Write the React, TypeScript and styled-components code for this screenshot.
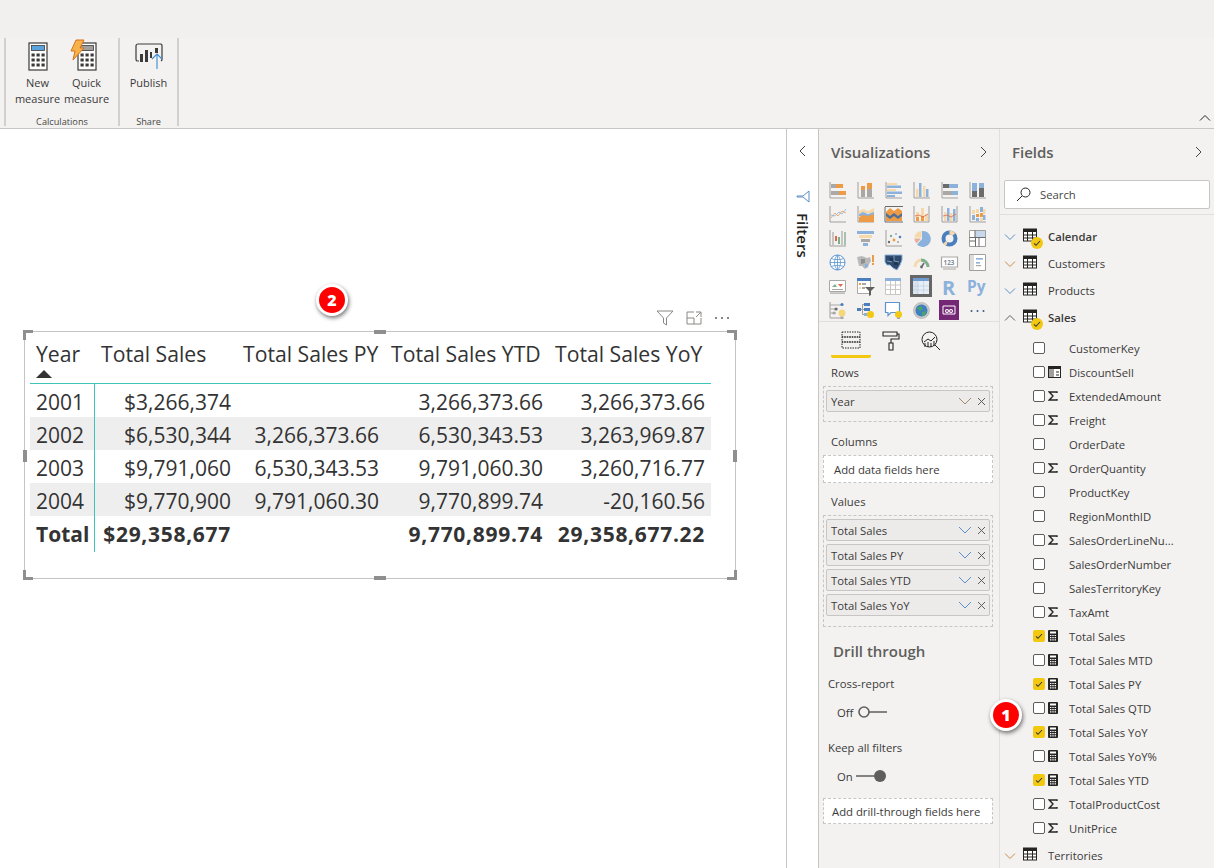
import React from "react";
import styled, { createGlobalStyle } from "styled-components";

const Global = createGlobalStyle`
  html, body { margin: 0; padding: 0; background: #fff; }
  body { font-family: "Open Sans", "Noto Sans", "Liberation Sans", sans-serif; color: #323130; }
  * { box-sizing: border-box; }
`;

const Page = styled.div`
  width: 1214px; height: 868px; display: flex; flex-direction: column; overflow: hidden;
`;
/* ---------- ribbon ---------- */
const Ribbon = styled.header`
  height: 129px; flex: none; background: #f3f2f1; border-bottom: 1px solid #c8c6c4;
  display: flex; flex-direction: column; position: relative;
`;
const RibbonTop = styled.div` height: 38px; flex: none; background: #f1f0ef; `;
const RibbonBody = styled.div` flex: 1; display: flex; padding: 0 0 2px 4px; `;
const Group = styled.section<{ $w: number; $first?: boolean }>`
  width: ${(p) => p.$w}px; display: flex; flex-direction: column; align-items: center;
  border-right: 2px solid #d2d0ce;
  ${(p) => (p.$first ? "border-left: 2px solid #d2d0ce;" : "")}
`;
const GroupButtons = styled.div` display: flex; flex: 1; padding-top: 4px; `;
const RibbonButton = styled.div<{ $w: number }>`
  width: ${(p) => p.$w}px; display: flex; flex-direction: column; align-items: center;
  font-size: 11px; line-height: 16px; text-align: center; color: #3b3a39;
  svg { display: block; margin-bottom: 4px; }
`;
const GroupLabel = styled.div` font-size: 9.2px; line-height: 12px; color: #484644; margin-bottom: -2px; padding-bottom: 0; `;
const Collapse = styled.div` position: absolute; right: 3px; bottom: 4px; height: 12px; line-height: 0; `;

/* ---------- main ---------- */
const Main = styled.main` flex: 1; display: flex; min-height: 0; `;
const Canvas = styled.div` width: 786px; flex: none; background: #fff; padding: 202px 0 0 24px; `;
const Visual = styled.div`
  width: 712px; height: 248px; border: 1px solid #c4c4c4; position: relative; padding: 0 0 0 5px;
`;
const Handle = styled.span<{ $pos: string }>`
  position: absolute; background: #8f8f8f;
  ${(p) => p.$pos}
`;
const Corner = styled.span<{ $pos: string }>`
  position: absolute; width: 10px; height: 10px; ${(p) => p.$pos}
`;
const VisualTools = styled.div`
  position: absolute; right: 5px; top: -22px; display: flex; gap: 12px; align-items: center;
`;
const Badge = styled.div<{ $x: number; $y: number }>`
  position: absolute; left: ${(p) => p.$x}px; top: ${(p) => p.$y}px; width: 32px; height: 32px; border-radius: 50%;
  background: #f00; border: 3px solid #fff; box-shadow: 1px 2px 4px rgba(0,0,0,.55);
  color: #fff; font: 800 16px/26px "Open Sans", sans-serif; text-align: center; z-index: 3;
`;
const COLS = "65px 142px 148px 164px 162px";
const HeadRow = styled.div`
  display: grid; grid-template-columns: ${COLS}; width: 681px; height: 52px; border-bottom: 1px solid #3fc4b9;
  font-size: 21.2px; line-height: 27px; color: #333;
`;
const HeadCell = styled.div` padding: 8px 0 0 6px; white-space: nowrap; position: relative; `;
const SortArrow = styled.span`
  position: absolute; left: 6px; top: 38px; width: 0; height: 0;
  border-left: 8px solid transparent; border-right: 8px solid transparent; border-bottom: 8px solid #333;
`;
const BodyRow = styled.div<{ $stripe?: boolean; $total?: boolean }>`
  display: grid; grid-template-columns: ${COLS}; width: 681px; height: 33px;
  background: ${(p) => (p.$stripe ? "#eeeeee" : "transparent")};
  font-size: 21px; line-height: 36px; color: #333; font-weight: ${(p) => (p.$total ? 700 : 400)};
`;
const NumCell = styled.div<{ $spread?: boolean }>`
  text-align: right; padding-right: 6px; white-space: nowrap;
  letter-spacing: ${(p) => (p.$spread ? "0.7px" : "0")};
`;
const YearCell = styled.div` padding-left: 6px; border-right: 1px solid #3fc4b9; white-space: nowrap; `;

const FilterStrip = styled.aside`
  width: 33px; flex: none; background: #fff; border-left: 1px solid #c8c6c4; border-right: 1px solid #c8c6c4;
  display: flex; flex-direction: column; align-items: center; padding-top: 16px; color: #323130;
`;
const VerticalText = styled.div`
  writing-mode: vertical-rl; font-size: 15px; font-weight: 600; line-height: 16px; margin-top: 10px; color: #252423;
`;
const VizPanel = styled.aside`
  width: 181px; flex: none; background: #f3f2f1; border-right: 1px solid #e1dfdd; display: flex; flex-direction: column;
`;
const PanelHead = styled.div<{ $left: number; $right: number }>`
  height: 46px; flex: none; display: flex; align-items: center; justify-content: space-between;
  padding: 0 ${(p) => p.$right}px 0 ${(p) => p.$left}px; font-size: 15px; font-weight: 600; color: #605e5c;
`;
const VizGrid = styled.div`
  height: 147px; flex: none; padding: 3px 0 0 4px; display: grid;
  grid-template-columns: repeat(6, 28px); grid-auto-rows: 24px; border-bottom: 1px solid #e1dfdd;
`;
const VizCell = styled.div`
  display: flex; align-items: center; justify-content: center; position: relative;
`;
const Tabs = styled.div` display: flex; height: 36px; flex: none; padding-left: 12px; `;
const Tab = styled.div<{ $on?: boolean }>`
  width: 40px; display: flex; justify-content: center; padding-top: 9px;
  border-bottom: 3px solid ${(p) => (p.$on ? "#f2c811" : "transparent")};
  border-radius: 0 0 2px 2px;
`;
const WellLabel = styled.div<{ $mt: number }>`
  margin-top: ${(p) => p.$mt}px; height: 18px; line-height: 20px; padding-left: 12px; font-size: 11.3px; color: #3b3a39;
`;
const Well = styled.div<{ $mt?: number; $h: number; $empty?: boolean; $wide?: boolean }>`
  margin: ${(p) => p.$mt ?? 5}px 6px 0 4px; height: ${(p) => p.$h}px; flex: none;
  border: 1px dashed #c8c6c4; background: ${(p) => (p.$empty ? "#fff" : "transparent")};
  padding: ${(p) => (p.$empty ? "0" : "3px 2px 0")};
  display: flex; flex-direction: column; gap: 3px;
  ${(p) => (p.$empty ? `justify-content: center; padding-left: ${p.$wide ? 8 : 10}px; font-size: 11.3px; color: #3b3a39; white-space: nowrap;` : "")}
`;
const Pill = styled.div`
  height: 22px; flex: none; background: #edebe9; border: 1px solid #c8c6c4; border-radius: 2px;
  display: flex; align-items: center; padding: 0 3px 0 4px; font-size: 11.3px; color: #3b3a39;
`;
const PillName = styled.span` flex: 1; white-space: nowrap; `;
const PillGap = styled.span` width: 5px; flex: none; `;
const DrillTitle = styled.div`
  margin-top: 13px; height: 22px; line-height: 22px; padding-left: 14px; font-size: 15px; font-weight: 600; color: #605e5c;
`;
const DrillLabel = styled.div<{ $mt: number }>`
  margin-top: ${(p) => p.$mt}px; height: 18px; line-height: 18px; padding-left: 9px; font-size: 11.3px; color: #3b3a39;
`;
const ToggleRow = styled.div`
  margin-top: 10px; height: 18px; padding-left: 18px; display: flex; align-items: center; gap: 3px;
  font-size: 11.3px; color: #3b3a39;
`;

const FieldsPanel = styled.aside` flex: 1; background: #f3f2f1; display: flex; flex-direction: column; min-width: 0; `;
const SearchWrap = styled.div`
  padding: 5px 4px; border-bottom: 1px solid #e1dfdd; height: 40px; flex: none;
`;
const SearchBox = styled.div`
  height: 29px; background: #fff; border: 1px solid #c8c6c4; border-radius: 2px;
  display: flex; align-items: center; gap: 9px; padding-left: 11px; font-size: 11.3px; color: #484644;
`;
const Tree = styled.div` padding: 8px 0 0 4px; display: flex; flex-direction: column; `;
const SalesGap = styled.div` height: 5px; flex: none; `;
const TableRow = styled.div<{ $bold?: boolean; $mt?: number }>`
  height: 27px; flex: none; display: flex; align-items: center; font-size: 11.3px; color: #3b3a39;
  margin-top: ${(p) => p.$mt ?? 0}px;
  font-weight: ${(p) => (p.$bold ? 600 : 400)};
`;
const TableIconWrap = styled.span` width: 25px; margin-left: 7px; height: 18px; position: relative; flex: none; `;
const Check = styled.span`
  position: absolute; left: 8px; top: 9px; width: 12px; height: 12px; border-radius: 50%; background: #f2c811;
  display: flex; align-items: center; justify-content: center;
`;
const FieldRow = styled.div`
  height: 24px; flex: none; display: flex; align-items: center; padding-left: 29px; font-size: 11.3px; color: #3b3a39;
`;
const CheckBox = styled.span<{ $on?: boolean }>`
  width: 12px; height: 12px; flex: none; border-radius: 2px;
  background: ${(p) => (p.$on ? "#f2c811" : "#fff")};
  border: 1px solid ${(p) => (p.$on ? "#f2c811" : "#605e5c")};
  display: flex; align-items: center; justify-content: center;
`;
const FieldIcon = styled.span` width: 24px; padding-left: 3px; flex: none; display: flex; align-items: center; height: 14px; `;
const FieldName = styled.span` white-space: nowrap; `;
const BoltMargin = styled.span` display: block; `;

/* ---------- small icons ---------- */
const Chevron = ({ dir, size = 12, color = "#605e5c" }: { dir: "l" | "r" | "d" | "u"; size?: number; color?: string }) => {
  const d = { l: "M8 1L3 6l5 5", r: "M4 1l5 5-5 5", d: "M1 3.5l5 5 5-5", u: "M1 8.5l5-5 5 5" }[dir];
  return <svg width={size} height={size} viewBox="0 0 12 12" fill="none" stroke={color} strokeWidth="1"><path d={d} /></svg>;
};
const TableGlyph = () => (
  <svg width="14" height="14" viewBox="0 0 14 14">
    <rect x="0.5" y="1" width="13" height="12" fill="#fff" stroke="#252423" />
    <rect x="0" y="1" width="14" height="3" fill="#252423" />
    <path d="M0 7h14M0 10h14M4.5 3v10M9.5 3v10" stroke="#252423" strokeWidth="1" />
  </svg>
);
const Tick = () => (
  <svg width="8" height="8" viewBox="0 0 8 8" fill="none" stroke="#3b3a39" strokeWidth="1.1"><path d="M1 4.3l2 2 4-4.3" /></svg>
);
const CalcGlyph = () => (
  <svg width="10" height="12" viewBox="0 0 10 12">
    <rect width="10" height="12" fill="#252423" rx="1" />
    <rect x="2" y="1.5" width="6" height="2" fill="#fff" />
    <path d="M2 5.5h1.4M4.3 5.5h1.4M6.6 5.5H8M2 7.7h1.4M4.3 7.7h1.4M6.6 7.7H8M2 9.9h1.4M4.3 9.9h1.4M6.6 9.9H8" stroke="#fff" strokeWidth="1.2" />
  </svg>
);
const SigmaGlyph = () => (
  <svg width="10" height="10" viewBox="0 0 10 10" fill="none" stroke="#252423" strokeWidth="1.4"><path d="M9 2V1H1.3L5 5 1.3 9H9V8" /></svg>
);
const DateTableGlyph = () => (
  <svg width="13" height="12" viewBox="0 0 13 12">
    <rect x="0.5" y="0.5" width="12" height="11" fill="#fff" stroke="#252423" />
    <rect x="0" y="0" width="13" height="3" fill="#252423" />
    <rect x="1" y="3" width="5" height="8" fill="#a19f9d" />
    <path d="M8 6h3M8 9h3" stroke="#252423" />
  </svg>
);

const Calculator = ({ top = "#5ba3dc" }: { top?: string }) => (
  <>
    <rect x="1" y="1" width="18" height="27" fill="#fff" stroke="#3b3a39" strokeWidth="1.2" />
    <rect x="3.5" y="3.5" width="13" height="5" fill={top} stroke="#3b3a39" strokeWidth="0.8" />
    {[11.5, 16.5, 21.5].map((y) =>
      [3.5, 8.5, 13.5].map((x) => <rect key={`${x}-${y}`} x={x} y={y} width="3.2" height="3" fill="#3b3a39" />),
    )}
  </>
);

/* ---------- visualization gallery drawing data ---------- */
const O = "#ee9b45", B = "#8cb1db", G = "#aaa8a6", T = "#f5d9ab", K = "#a19f9d", D = "#6b6b6b", N = "#35506f";
type Shape =
  | [number, number, number, number, string]
  | ["p", string, string, string?, number?]
  | ["c", number, number, number, string, string?, number?]
  | ["t", number, number, number, string, string];
const axis: Shape = ["p", "M1 0V16H17", "none", K, 1];
const rightAxis: Shape = ["p", "M1 0V16H16V0", "none", K, 1];
const VIZ: Shape[][] = [
  [axis, [2, 2, 5, 4, G], [7, 2, 7, 4, O], [2, 9, 8, 4, G], [10, 9, 7, 4, O]],
  [axis, [4, 8, 4, 7, G], [4, 4, 4, 4, O], [10, 7, 5, 8, G], [10, 1, 5, 6, O]],
  [axis, [2, 1, 10, 2, T], [2, 3.5, 14, 2.5, B], [2, 7, 9, 2, T], [2, 9.5, 15, 2.5, B], [2, 13, 8, 2, B]],
  [axis, [3, 7, 2.5, 8, T], [6, 1, 2.5, 14, B], [10, 4, 2.5, 11, T], [13, 7, 2.5, 8, B]],
  [axis, [2, 2, 6, 4, D], [8, 2, 9, 4, B], [2, 9, 9, 4, G], [11, 9, 6, 4, B]],
  [axis, [3, 1, 5, 8, B], [3, 9, 5, 6, D], [10, 1, 5, 5, B], [10, 6, 5, 9, D]],
  [axis, ["p", "M2 12l4-5 3 3 4-5 4 2", "none", O, 0.8], ["p", "M2 9l4 1 4-4 3 2 4-5", "none", B, 0.8]],
  [axis, ["p", "M2 5l4-2 5 2 6-3v5H2z", T, "none"], ["p", "M2 8l4-2 5 2 6-2v4H2z", B, "none"], ["p", "M2 11l4-2 5 1 6-2v8H2z", O, "none"]],
  [["p", "M0 16V1M0 16h18M0 .5H18", "none", D, 1], ["p", "M1 6l4-4 4 3 4-3 4 3v10H1z", O, "none"], ["p", "M1 7l4 3 4-3 4 3 4-3v3l-4 3-4-3-4 3-4-3z", "#4f7199", "none"]],
  [rightAxis, [3, 6, 3, 9, T], [8, 2, 3, 13, T], [12, 8, 3, 7, T], [3, 11, 3, 4, O], [8, 10, 3, 5, O], ["p", "M2 10l4-1 4 2 5-3", "none", "#e0664c", 0.8]],
  [rightAxis, [3, 6, 2.5, 9, T], [6, 2, 2.5, 13, B], [9, 7, 2.5, 8, T], [12, 3, 2.5, 12, B], ["p", "M2 10l4-1 4 2 5-3", "none", "#e0664c", 0.8]],
  [axis, [3, 4, 3, 4, T], [3, 9, 3, 5, B], [7, 3, 3, 4, T], [7, 8, 3, 3, O], [7, 12, 3, 3, B], [11, 1, 3, 5, B], [11, 7, 3, 4, O], [11, 12, 3, 3, T], [14, 3, 2.5, 5, T], [14, 9, 2.5, 5, B]],
  [axis, [3, 2, 2, 13, "#c8c6c4"], [6, 6, 2, 5, "#e0664c"], [9, 7, 2, 7, "#7fb08e"], [12, 1, 2, 14, "#c8c6c4"], [15, 2, 2, 13, "#a8c0b0"]],
  [[0, 1, 17, 3, B], [2, 5, 13, 3, T], [4, 9, 9, 3, G], [6, 13, 5, 3, B]],
  [axis, ["c", 4, 12, 1.2, D], ["c", 6, 6, 1.2, "#7fb08e"], ["c", 9, 10, 1.4, O], ["c", 11, 4, 1.1, B], ["c", 13, 12, 1.1, G], ["c", 15, 7, 1.3, "#4a7fbe"]],
  [["p", "M9 1A8 8 0 1 1 4 14.5L9 9z", "#8ab2dd", "none"], ["p", "M8.5 1A8 8 0 0 0 1.3 7.5H8.5z", T, "none"], ["p", "M1.3 8.5H8L3.7 13.5A8 8 0 0 1 1.3 8.5z", "#e8ae97", "none"]],
  [["c", 8.5, 8.5, 6, "none", "#4a7fbe", 4], ["p", "M8.5 .5a8 8 0 0 1 6 2.6l-3 2.6a4 4 0 0 0-3-1.3z", T, "none"], ["p", "M2 14l3-3 1.5 1.5-1.5 3.5z", T, "none"]],
  [["p", "M.5 .5h16v16H.5z", "#fff", K, 1], [6, 1, 10, 6, "#c7d8ec"], ["p", "M6 .5v7M.5 7.5h16M.5 11h6M10 7.5v9M6.5 7.5v9", "none", D, 1]],
  [["c", 8.5, 8.5, 7.5, "#fff", "#5b94cf", 1], ["p", "M8.5 1v15M1 8.5h15M2 4.5c4 1.5 9 1.5 13 0M2 12.5c4-1.5 9-1.5 13 0M8.5 1c-4 4-4 11 0 15M8.5 1c4 4 4 11 0 15", "none", "#5b94cf", 0.8]],
  [["p", "M0 3l5-1 5 2 3-1 1 4-2 3-1 3-3 2-3-3H2z", "#b9b9b9", "none"], ["p", "M4 5l4 0 0 4-4 1z", "#8e8e8e", "none"], ["p", "M8 10l3 0 0 3-3 1z", "#8cb1db", "none"], [15, 1, 2, 7, O], [15, 9, 2, 2, O]],
  [["p", "M0 1h17v5l-2 5-3 5-4-2-3-3H2L0 8z", "#2f4a6d", "#8cb1db", 1], ["p", "M4 4h5v3H6zM9 8h4v3H9z", "#1f3550", "none"], ["p", "M2 7l5 1M9 2v5M9 7l5 1", "none", "#8cb1db", .8]],
  [["p", "M2 13a7 7 0 0 1 6-7", "none", T, 3], ["p", "M8 6a7 7 0 0 1 7 7", "none", "#7fb08e", 3], ["p", "M8.5 13L11 9", "none", D, 1.6], ["c", 8.5, 13, 1.4, D]],
  [["p", "M.5 3h16v10H.5z", "#fff", G, 1.2], ["t", 2.6, 11, 6.3, "#7f8c99", "123"], [2, 14.5, 13, 1, G]],
  [["p", "M.5 .5h16v16H.5z", "#fff", K, 1], [1, 1, 4, 15, "#dedcda"], [7, 4, 7, 1.6, B], [7, 8, 4, 1.6, B], [7, 11, 5, 1.2, G]],
  [["p", "M.5 2.5h16v11H.5z", "#fff", G, 1], ["p", "M3 9l3-3 2 3z", "#7fb08e", "none"], ["p", "M9 6h5l-2.5 3z", "#e0664c", "none"], [3, 11, 11, 1, G], [1, 14.5, 15, 1.2, G]],
  [[0, 0, 14, 16, "#fff"], ["p", "M.5 .5h13v15H.5z", "none", G, 1], [0, 0, 14, 3, "#4a7fbe"], [2, 5, 2, 2, O], [5, 5, 4, 2, G], [2, 9, 2, 2, T], [5, 9, 3, 2, G], ["p", "M8 9h10l-4 4v4l-2 1v-5z", "#605e5c", "none"]],
  [["p", "M.5 .5h15v16H.5z", "#fff", "#c8c6c4", 1], [0, 0, 16, 3, "#8cb1db"], ["p", "M5.5 3v13M10.5 3v13M1 7h14M1 11.5h14", "none", "#c8c6c4", 1]],
  [[0, 0, 22, 22, "#666"], [3, 3, 16, 16, "#fff"], [3, 3, 16, 3, "#6f9bcf"], [3, 6, 5, 13, "#d8e4f1"], [8, 6, 11, 13, "#e7eef6"], ["p", "M8 6v13M13.5 6v13M3 11h16M3 15h16", "none", "#c3d2e3", .8]],
  [["t", 1, 17, 20, "#8cb1db", "R"]],
  [["t", -2, 14, 15.5, "#8cb1db", "Py"]],
  [["p", "M1 0V16H14", "none", K, 1], ["p", "M1 3h12M1 7h8M1 11h6", "none", G, 1], ["c", 13, 2.5, 1.6, "#4a7fbe"], ["c", 7, 7, 1.6, D], ["c", 5, 11, 1.6, G], ["c", 13, 11, 3.5, "#f5d77b"], [11.5, 14.5, 3, 2.5, G]],
  [[0, 6, 4, 3, "#4a7fbe"], [7, 1, 6, 3, "#4a7fbe"], [7, 6, 6, 3, "#4a7fbe"], [7, 11, 4, 3, "#8cb1db"], ["p", "M4 7.5h3M5.5 2.5v10M5.5 2.5H7M5.5 12.5H7", "none", K, 1], ["c", 13.5, 12.5, 3.5, "#f2c811"]],
  [["p", "M.5 .5h14v10H6l-3 3v-3H.5z", "#fff", "#5b94cf", 1.2], ["c", 13.5, 12.5, 3.5, "#f2c811"], [12, 15.5, 3, 1.5, G]],
  [["c", 8.5, 8.5, 8, "#c9c9c9", K, .5], ["c", 8.5, 8.5, 6, "#3e7fc0"], ["p", "M4 6l4-2 2 3-3 2zM9 10l4-1-1 4-3 1z", "#4aa564", "none"]],
  [[0, 0, 20, 20, "#742774"], ["p", "M4 6h12v8H4z", "none", "#fff", 1], ["c", 8, 11, 2, "#fff"], ["c", 12, 11, 2, "#fff"], ["c", 8, 11, .9, "#742774"], ["c", 12, 11, .9, "#742774"]],
  [["c", 2.5, 9, 1, "#3b5d86"], ["c", 8.5, 9, 1, "#3b5d86"], ["c", 14.5, 9, 1, "#3b5d86"]],
];
const SIZES: Record<number, number> = { 27: 22, 34: 20 };
const VizIcon = ({ shapes, size }: { shapes: Shape[]; size: number }) => (
  <svg width={size} height={size} viewBox={`0 0 ${size} ${size}`} overflow="visible">
    {shapes.map((s, i) => {
      if (s[0] === "p") return <path key={i} d={s[1]} fill={s[2]} stroke={s[3] ?? "none"} strokeWidth={s[4] ?? 1} />;
      if (s[0] === "c") return <circle key={i} cx={s[1]} cy={s[2]} r={s[3]} fill={s[4]} stroke={s[5] ?? "none"} strokeWidth={s[6] ?? 1} />;
      if (s[0] === "t")
        return (
          <text key={i} x={s[1]} y={s[2]} fontSize={s[3]} fill={s[4]} fontFamily="'Open Sans', sans-serif" fontWeight={700}>
            {s[5]}
          </text>
        );
      return <rect key={i} x={s[0]} y={s[1]} width={s[2]} height={s[3]} fill={s[4]} />;
    })}
  </svg>
);

const Toggle = ({ on }: { on?: boolean }) => (
  <svg width="32" height="14" viewBox="0 0 32 14">
    {on ? (
      <>
        <path d="M0 7h24" stroke="#605e5c" strokeWidth="1.5" />
        <circle cx="24" cy="7" r="6" fill="#605e5c" />
      </>
    ) : (
      <>
        <circle cx="8" cy="7" r="5" fill="none" stroke="#605e5c" strokeWidth="1.6" />
        <path d="M13 7h18" stroke="#605e5c" strokeWidth="1.5" />
      </>
    )}
  </svg>
);
const Cross = () => (
  <svg width="9" height="9" viewBox="0 0 9 9" stroke="#605e5c" strokeWidth="1"><path d="M1 1l7 7M8 1L1 8" /></svg>
);
const FieldPill = ({ name, blue }: { name: string; blue?: boolean }) => (
  <Pill>
    <PillName>{name}</PillName>
    <svg width="14" height="8" viewBox="0 0 14 8" fill="none" stroke={blue ? "#5b8fc7" : "#a08a6a"} strokeWidth="1"><path d="M1 1l6 6 6-6" /></svg>
    <PillGap />
    <Cross />
  </Pill>
);

const rows = [
  { y: "2001", s: "$3,266,374", py: "", ytd: "3,266,373.66", yoy: "3,266,373.66" },
  { y: "2002", s: "$6,530,344", py: "3,266,373.66", ytd: "6,530,343.53", yoy: "3,263,969.87" },
  { y: "2003", s: "$9,791,060", py: "6,530,343.53", ytd: "9,791,060.30", yoy: "3,260,716.77" },
  { y: "2004", s: "$9,770,900", py: "9,791,060.30", ytd: "9,770,899.74", yoy: "-20,160.56" },
];
const fields: { n: string; i?: "s" | "c" | "d"; on?: boolean }[] = [
  { n: "CustomerKey" }, { n: "DiscountSell", i: "d" }, { n: "ExtendedAmount", i: "s" }, { n: "Freight", i: "s" },
  { n: "OrderDate" }, { n: "OrderQuantity", i: "s" }, { n: "ProductKey" }, { n: "RegionMonthID" },
  { n: "SalesOrderLineNu...", i: "s" }, { n: "SalesOrderNumber" }, { n: "SalesTerritoryKey" }, { n: "TaxAmt", i: "s" },
  { n: "Total Sales", i: "c", on: true }, { n: "Total Sales MTD", i: "c" }, { n: "Total Sales PY", i: "c", on: true },
  { n: "Total Sales QTD", i: "c" }, { n: "Total Sales YoY", i: "c", on: true }, { n: "Total Sales YoY%", i: "c" },
  { n: "Total Sales YTD", i: "c", on: true }, { n: "TotalProductCost", i: "s" }, { n: "UnitPrice", i: "s" },
];
const corners = [
  "left:-2px;top:-2px;border-left:3px solid #8f8f8f;border-top:3px solid #8f8f8f;",
  "right:-2px;top:-2px;border-right:3px solid #8f8f8f;border-top:3px solid #8f8f8f;",
  "left:-2px;bottom:-2px;border-left:3px solid #8f8f8f;border-bottom:3px solid #8f8f8f;",
  "right:-2px;bottom:-2px;border-right:3px solid #8f8f8f;border-bottom:3px solid #8f8f8f;",
];

const TableNode = ({ name, bold, open, check, color, mt }: { name: string; bold?: boolean; open?: boolean; check?: boolean; color: string; mt?: number }) => (
  <TableRow $bold={bold} $mt={mt}>
    <Chevron dir={open ? "u" : "d"} color={color} />
    <TableIconWrap>
      <TableGlyph />
      {check && <Check><Tick /></Check>}
    </TableIconWrap>
    {name}
  </TableRow>
);

export default function App() {
  return (
    <Page>
      <Global />
      <Ribbon>
        <RibbonTop />
        <RibbonBody>
          <Group $w={116} $first>
            <GroupButtons>
              <RibbonButton $w={49}>
                <svg width="20" height="29" viewBox="0 0 20 29"><Calculator /></svg>
                <span>New<br />measure</span>
              </RibbonButton>
              <RibbonButton $w={49}>
                <BoltMargin>
                  <svg width="28" height="29" viewBox="-4 0 28 29" overflow="visible">
                    <Calculator top="#a19f9d" />
                    <path d="M-1-2h8L3 6h4L-4 18l2-9h-4z" fill="#f7b34a" stroke="#d9711c" strokeWidth="1" />
                  </svg>
                </BoltMargin>
                <span>Quick<br />measure</span>
              </RibbonButton>
            </GroupButtons>
            <GroupLabel>Calculations</GroupLabel>
          </Group>
          <Group $w={59}>
            <GroupButtons>
              <RibbonButton $w={50}>
                <svg width="30" height="29" viewBox="0 0 30 29">
                  <path d="M5 19H3a2 2 0 0 1-1-2V4a2 2 0 0 1 2-2h23a2 2 0 0 1 1 2v13a2 2 0 0 1-1 2" fill="none" stroke="#3b3a39" strokeWidth="1.2" />
                  <path d="M6 12h3v8H6zM11 8h3v12h-3zM16 10h2v6h-2zM21 6h3v5h-3z" fill="#3b3a39" />
                  <path d="M23 27V12M18 17l5-5 5 5" fill="none" stroke="#3c8bd0" strokeWidth="1.1" />
                </svg>
                <span>Publish</span>
              </RibbonButton>
            </GroupButtons>
            <GroupLabel>Share</GroupLabel>
          </Group>
        </RibbonBody>
        <Collapse><Chevron dir="u" size={12} color="#252423" /></Collapse>
      </Ribbon>
      <Main>
        <Canvas>
          <Badge $x={316} $y={284}>2</Badge>
          <Visual>
            {corners.map((c) => <Corner key={c} $pos={c} />)}
            <Handle $pos="left:349px;top:-2px;width:12px;height:4px;" />
            <Handle $pos="left:349px;bottom:-2px;width:12px;height:4px;" />
            <Handle $pos="left:-2px;top:118px;width:4px;height:12px;" />
            <Handle $pos="right:-2px;top:118px;width:4px;height:12px;" />
            <VisualTools>
              <svg width="18" height="16" viewBox="0 0 18 16" fill="none" stroke="#8a8886"><path d="M1 1h16l-6.5 7v7l-3-2V8z" /></svg>
              <svg width="16" height="14" viewBox="0 0 16 14" fill="none" stroke="#8a8886"><path d="M8 1H1v12h14V7M1 7h7v6M10 1h5v5M15 1L10 6" /></svg>
              <svg width="16" height="4" viewBox="0 0 16 4" fill="#605e5c"><circle cx="2" cy="2" r="1" /><circle cx="8" cy="2" r="1" /><circle cx="14" cy="2" r="1" /></svg>
            </VisualTools>
            <HeadRow>
              <HeadCell>Year<SortArrow /></HeadCell>
              <HeadCell>Total Sales</HeadCell>
              <HeadCell>Total Sales PY</HeadCell>
              <HeadCell>Total Sales YTD</HeadCell>
              <HeadCell>Total Sales YoY</HeadCell>
            </HeadRow>
            {rows.map((r, i) => (
              <BodyRow key={r.y} $stripe={i % 2 === 1}>
                <YearCell>{r.y}</YearCell>
                <NumCell>{r.s}</NumCell>
                <NumCell>{r.py}</NumCell>
                <NumCell>{r.ytd}</NumCell>
                <NumCell>{r.yoy}</NumCell>
              </BodyRow>
            ))}
            <BodyRow $total>
              <YearCell>Total</YearCell>
              <NumCell $spread>$29,358,677</NumCell>
              <NumCell />
              <NumCell $spread>9,770,899.74</NumCell>
              <NumCell $spread>29,358,677.22</NumCell>
            </BodyRow>
          </Visual>
        </Canvas>
        <FilterStrip>
          <Chevron dir="l" color="#484644" />
          <svg width="14" height="13" viewBox="0 0 14 13" fill="none" stroke="#5b8fc7" style={{ marginTop: 33 }}><path d="M13 1L7 6H1l0 1h6l6 5z" /></svg>
          <VerticalText>Filters</VerticalText>
        </FilterStrip>
        <VizPanel>
          <PanelHead $left={12} $right={10}>Visualizations<Chevron dir="r" color="#484644" /></PanelHead>
          <VizGrid>
            {VIZ.map((s, i) => (
              <VizCell key={i}><VizIcon shapes={s} size={SIZES[i] ?? 17} /></VizCell>
            ))}
          </VizGrid>
          <Tabs>
            <Tab $on>
              <svg width="20" height="18" viewBox="0 0 20 18" fill="none" stroke="#252423" strokeDasharray="1.5 1"><path d="M1 1h18v5H1zM1 6h18v5H1zM1 11h18v6H1z" /></svg>
            </Tab>
            <Tab>
              <svg width="18" height="20" viewBox="0 0 18 20" fill="none" stroke="#252423" strokeWidth="1.1"><path d="M1 1h14v4H1zM15 3h2v5H9v4M7 12h4v7H7z" /></svg>
            </Tab>
            <Tab>
              <svg width="20" height="20" viewBox="0 0 20 20" fill="none" stroke="#252423" strokeWidth="1"><circle cx="8.5" cy="8.5" r="7.5" /><path d="M14 14l5 5M3 11l4-3 3 2 4-4M4 16v-4M7 16v-5M10 16v-4M13 15v-5" /></svg>
            </Tab>
          </Tabs>
          <WellLabel $mt={5}>Rows</WellLabel>
          <Well $h={36}><FieldPill name="Year" /></Well>
          <WellLabel $mt={10}>Columns</WellLabel>
          <Well $h={28} $empty>Add data fields here</Well>
          <WellLabel $mt={9}>Values</WellLabel>
          <Well $h={112}>
            <FieldPill name="Total Sales" blue />
            <FieldPill name="Total Sales PY" blue />
            <FieldPill name="Total Sales YTD" blue />
            <FieldPill name="Total Sales YoY" blue />
          </Well>
          <DrillTitle>Drill through</DrillTitle>
          <DrillLabel $mt={13}>Cross-report</DrillLabel>
          <ToggleRow>Off <Toggle /></ToggleRow>
          <DrillLabel $mt={18}>Keep all filters</DrillLabel>
          <ToggleRow>On <Toggle on /></ToggleRow>
          <Well $mt={13} $h={26} $empty $wide>Add drill-through fields here</Well>
        </VizPanel>
        <FieldsPanel>
          <PanelHead $left={12} $right={10}>Fields<Chevron dir="r" color="#484644" /></PanelHead>
          <SearchWrap>
            <SearchBox>
              <svg width="15" height="15" viewBox="0 0 15 15" fill="none" stroke="#252423"><circle cx="9.5" cy="5.5" r="4.5" /><path d="M6 9l-5 5" /></svg>
              Search
            </SearchBox>
          </SearchWrap>
          <Tree>
            <TableNode name="Calendar" bold check color="#5b8fc7" />
            <TableNode name="Customers" color="#c98a4b" />
            <TableNode name="Products" color="#5b8fc7" />
            <TableNode name="Sales" bold open check color="#605e5c" />
            <SalesGap />
            {fields.map((f) => (
              <FieldRow key={f.n}>
                <CheckBox $on={f.on}>{f.on && <Tick />}</CheckBox>
                <FieldIcon>
                  {f.i === "s" && <SigmaGlyph />}
                  {f.i === "c" && <CalcGlyph />}
                  {f.i === "d" && <DateTableGlyph />}
                </FieldIcon>
                <FieldName>{f.n}</FieldName>
              </FieldRow>
            ))}
            <TableNode name="Territories" color="#c98a4b" mt={2} />
          </Tree>
          <Badge $x={990} $y={699}>1</Badge>
        </FieldsPanel>
      </Main>
    </Page>
  );
}
